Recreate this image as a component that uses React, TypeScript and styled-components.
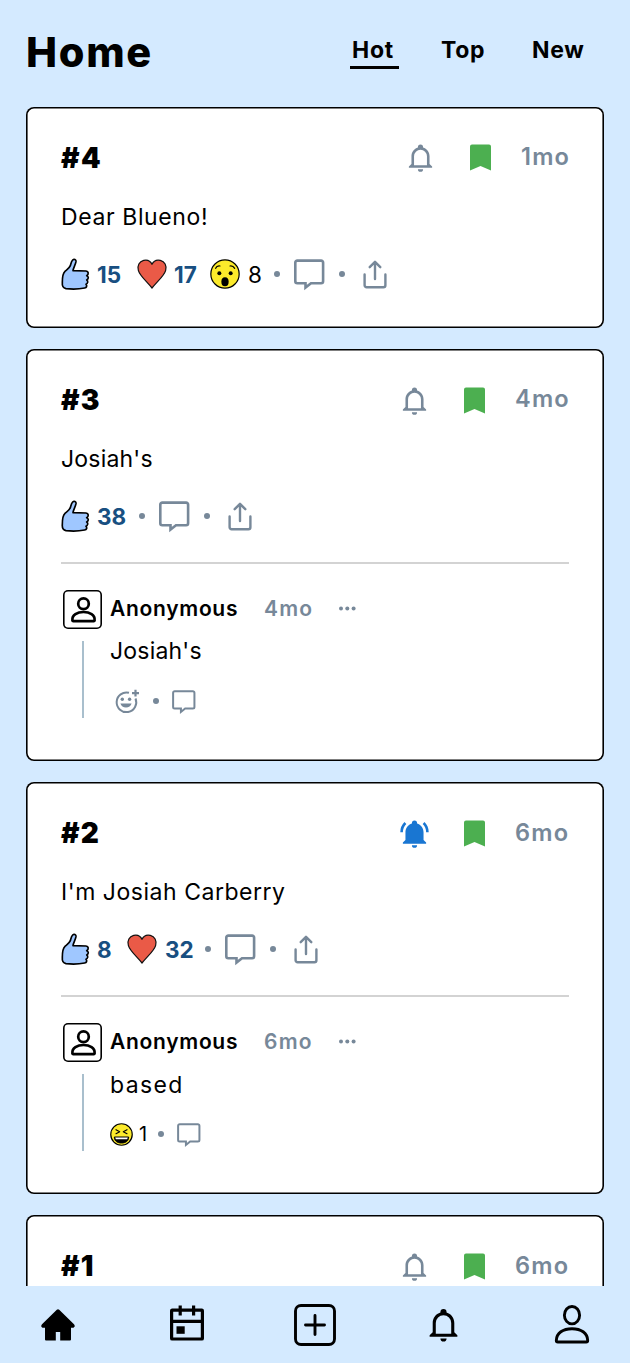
import React from "react";
import styled, { createGlobalStyle } from "styled-components";

const GlobalStyle = createGlobalStyle`
  * { box-sizing: border-box; }
  body { margin: 0; background: #d4eaff; }
  svg { display: block; flex: none; overflow: visible; }
`;

const slate = "#778899";

const Screen = styled.div`
  height: 1363px;
  display: flex;
  flex-direction: column;
  overflow: hidden;
  background: #d4eaff;
  color: #000;
  font-family: Inter, "Liberation Sans", sans-serif;
`;

const TopBar = styled.header`
  flex: none;
  height: 107px;
  padding: 0 45px 0 26px;
  display: flex;
  justify-content: space-between;
`;

const Title = styled.h1`
  margin: 0;
  font-size: 41.5px;
  font-weight: 800;
  line-height: 104px;
  letter-spacing: 1.7px;
`;

const Tabs = styled.nav`
  display: flex;
  gap: 40px;
  padding-top: 30px;
`;

const Tab = styled.a<{ $width: number; $active?: boolean }>`
  width: ${(p) => p.$width}px;
  height: 39px;
  padding-left: 2px;
  border-bottom: 3px solid ${(p) => (p.$active ? "#000" : "transparent")};
  font-size: 23px;
  font-weight: 700;
  line-height: 40px;
  letter-spacing: 0.7px;
  white-space: nowrap;
`;

const Feed = styled.main`
  flex: 1;
  min-height: 0;
  overflow: hidden;
  padding: 0 26px;
  display: flex;
  flex-direction: column;
  gap: 21px;
`;

const Card = styled.article<{ $height: number }>`
  flex: none;
  height: ${(p) => p.$height}px;
  padding: 32px 35px 0;
  background: #fff;
  border-radius: 8px;
  box-shadow: inset 0 0 0 1.6px #000;
`;

const CardHeader = styled.div`
  height: 38px;
  display: flex;
  align-items: center;
`;

const PostNumber = styled.h2<{ $track: number }>`
  margin: 0;
  flex: 1;
  font-size: 28px;
  font-weight: 900;
  letter-spacing: ${(p) => p.$track}px;
`;

const HeaderTools = styled.div<{ $lift?: number }>`
  display: flex;
  align-items: center;
  padding-bottom: ${(p) => p.$lift ?? 0}px;
`;

const BookmarkSlot = styled.span`
  margin: 0 30px 0 34px;
`;

const Time = styled.span<{ $width: number; $lift?: number }>`
  width: ${(p) => p.$width}px;
  padding-bottom: ${(p) => p.$lift ?? 0}px;
  color: ${slate};
  font-size: 23.6px;
  font-weight: 600;
  line-height: 36px;
  letter-spacing: 1.2px;
  white-space: nowrap;
`;

const PostText = styled.p<{ $track: number }>`
  margin: 21px 0 19px;
  font-size: 23px;
  line-height: 38px;
  letter-spacing: ${(p) => p.$track}px;
  white-space: nowrap;
`;

const Actions = styled.div`
  height: 38px;
  display: flex;
  align-items: center;
`;

const Reaction = styled.span<{ $gap: number }>`
  display: flex;
  align-items: center;
  gap: ${(p) => p.$gap}px;
  & + & { margin-left: 15px; }
`;

const Count = styled.span<{ $width: number; $mine?: boolean; $size?: number }>`
  width: ${(p) => p.$width}px;
  color: ${(p) => (p.$mine ? "#184f81" : "#000")};
  font-size: ${(p) => p.$size ?? 22.5}px;
  font-weight: ${(p) => (p.$mine ? 700 : 400)};
  white-space: nowrap;
`;

const Dot = styled.i<{ $before?: number; $after: number }>`
  flex: none;
  width: 6px;
  height: 6px;
  border-radius: 50%;
  margin: 0 ${(p) => p.$after}px 0 ${(p) => p.$before ?? 13}px;
  background: ${slate};
`;

const Divider = styled.hr`
  height: 2px;
  margin: 27px 0 26px;
  border: 0;
  background: #d3d3d3;
`;

const CommentHeader = styled.div`
  height: 38px;
  padding-bottom: 2px;
  display: flex;
  align-items: center;
`;

const Avatar = styled.span`
  width: 39px;
  height: 39px;
  margin: 2px 8px 0 2px;
  display: grid;
  place-items: center;
  border-radius: 5px;
  box-shadow: inset 0 0 0 1.6px #000;
`;

const Author = styled.strong`
  width: 154px;
  font-size: 21px;
  font-weight: 600;
  letter-spacing: 0.7px;
`;

const CommentTime = styled.span`
  width: 75px;
  color: ${slate};
  font-size: 21px;
  font-weight: 600;
  letter-spacing: 1.2px;
`;

const Thread = styled.div`
  display: flex;
`;

const ThreadLine = styled.span`
  width: 2px;
  height: 77px;
  margin: 13px 26px 0 21px;
  background: #a9bfcd;
`;

const CommentText = styled.p<{ $track: number; $drop?: number }>`
  height: 46px;
  margin: 0;
  padding-top: ${(p) => p.$drop ?? 0}px;
  font-size: 23px;
  line-height: 46px;
  letter-spacing: ${(p) => p.$track}px;
`;

const CommentActions = styled.div<{ $inset?: number }>`
  height: 54px;
  padding-left: ${(p) => p.$inset ?? 0}px;
  display: flex;
  align-items: center;
`;

const BottomNav = styled.nav`
  flex: none;
  height: 77px;
  padding: 0 33px;
  display: flex;
  align-items: center;
  justify-content: space-between;
  background: #d4eaff;
`;

const NavItem = styled.a<{ $lift?: number }>`
  width: 50px;
  height: 77px;
  padding-bottom: ${(p) => p.$lift ?? 0}px;
  display: grid;
  place-items: center;
`;

const Bell = ({ size = 31, color = slate }: { size?: number; color?: string }) => (
  <svg width={size} height={size} viewBox="0 0 24 24" fill={color}>
    <path d="M10 21h4a2 2 0 0 1-4 0m11-2v1H3v-1l2-2v-6c0-3.1 2.03-5.83 5-6.71V4a2 2 0 0 1 4 0v.29c2.97.88 5 3.61 5 6.71v6zm-4-8a5 5 0 0 0-10 0v7h10z" />
  </svg>
);

const RingingBell = () => (
  <svg width="31" height="31" viewBox="0 0 24 24" fill="#1976d2">
    <path d="M21 19v1H3v-1l2-2v-6c0-3.1 2.03-5.83 5-6.71V4a2 2 0 0 1 4 0v.29c2.97.88 5 3.61 5 6.71v6zm-7 2a2 2 0 0 1-4 0m9.75-17.81-1.42 1.42A8.98 8.98 0 0 1 21 11h2c0-2.93-1.16-5.75-3.25-7.81M1 11h2c0-2.4 1-4.7 2.67-6.39L4.25 3.19A10.96 10.96 0 0 0 1 11" />
  </svg>
);

const Bookmark = () => (
  <svg width="21" height="26" viewBox="0 0 21 26" fill="#4caf50">
    <path d="M2 .4h17a2 2 0 0 1 2 2V26.400l-10.500-4.400L0 26.400V2.400a2 2 0 0 1 2-2z" />
  </svg>
);

const Thumb = () => (
  <svg width="28" height="32" viewBox="0 0 84 96" fill="#9fc7ff" stroke="#000" strokeWidth="5" strokeLinejoin="round" strokeLinecap="round">
    <path d="M35 6C39 2 46 4 45 11C43 21 37 29 36 38L75 39C83 40 84 49 77 53C84 56 83 63 77 66C82 69 81 76 75 79C79 84 77 89 71 90C52 94 32 94 15 92C6 90 3 83 4 73C4 60 4 47 12 40C18 35 25 31 28 23C30 16 31 10 35 6Z" />
  </svg>
);

const Heart = () => (
  <svg width="30" height="30" viewBox="0 0 90 90" fill="#ea5a47" stroke="#111" strokeWidth="3.6" strokeLinejoin="round">
    <path d="M45 16C40 5 29 2 20 4C7 7 0 20 4 34C8 50 28 66 45 87C62 66 82 50 86 34C90 20 83 7 70 4C61 2 50 5 45 16Z" />
  </svg>
);

const Surprised = () => (
  <svg width="30" height="30" viewBox="0 0 90 90">
    <circle cx="45" cy="45" r="42.5" fill="#fcea2b" stroke="#000" strokeWidth="3.6" />
    <path d="M17 28C19 23 24 20 30 21M60 21C66 20 71 23 74 28" fill="none" stroke="#000" strokeWidth="3.6" strokeLinecap="round" />
    <circle cx="28" cy="43" r="6" />
    <circle cx="62" cy="43" r="6" />
    <ellipse cx="45" cy="68" rx="11" ry="13.5" />
  </svg>
);

const Laughing = () => (
  <svg width="23" height="23" viewBox="0 0 69 69">
    <circle cx="34.5" cy="34.5" r="32.2" fill="#fcea2b" stroke="#000" strokeWidth="3.6" />
    <path d="M18 20l11 6-11 6M51 20l-11 6 11 6" fill="none" stroke="#000" strokeWidth="3.4" strokeLinecap="round" strokeLinejoin="round" />
    <path d="M13 42h43c0 12-9 18-21.500 18S13 54 13 42z" stroke="#000" strokeWidth="3" strokeLinejoin="round" />
    <path d="M15.500 43.500h38l-2 5.500h-34z" fill="#fff" />
  </svg>
);

const CommentIcon = ({ small }: { small?: boolean }) => (
  <svg
    width={small ? 24 : 31}
    height={small ? 23 : 30}
    viewBox="0 0 31 30"
    fill="none"
    stroke={slate}
    strokeWidth="2.6"
  >
    <path d="M3.300 1.600h23.800a2 2 0 0 1 2 2v18.600a2 2 0 0 1-2 2H17l-5.500 4.400v-4.400H3.300a2 2 0 0 1-2-2V3.600a2 2 0 0 1 2-2z" />
  </svg>
);

const ShareIcon = () => (
  <svg width="24" height="29" viewBox="0 0 24 29" fill="none" stroke={slate} strokeWidth="2.400" strokeLinecap="round" strokeLinejoin="round">
    <path d="M1.600 14.500v10.700a2 2 0 0 0 2 2h16.800a2 2 0 0 0 2-2V14.500M12 19V2M6.700 7.200L12 1.800l5.300 5.400" />
  </svg>
);

const AddReaction = () => (
  <svg width="25" height="25" viewBox="0 0 25 25" fill="none" stroke={slate} strokeWidth="2">
    <path d="M14 3.800A9.800 9.800 0 1 0 20.500 9.500" />
    <path d="M17 4.200h7M20.500.8v6.800" strokeWidth="2.200" />
    <circle cx="7.300" cy="10.200" r="1.700" fill={slate} stroke="none" />
    <circle cx="14.600" cy="10.200" r="1.700" fill={slate} stroke="none" />
    <path d="M5.400 14.500h11.200a5.900 5.900 0 0 1-11.200 0z" fill={slate} stroke="none" />
  </svg>
);

const AvatarPerson = () => (
  <svg width="27" height="27" viewBox="0 0 27 27" fill="none" stroke="#000" strokeWidth="2.700" strokeLinejoin="round">
    <ellipse cx="14.500" cy="7.700" rx="5.300" ry="5.400" />
    <path d="M3.400 24.500C2.700 19 8.500 16 14.500 16S26.300 19 25.600 24.500C25.500 25 25.300 25.200 24.800 25.200H4.200C3.700 25.200 3.500 25 3.400 24.500z" />
  </svg>
);

const More = () => (
  <svg width="17" height="5" viewBox="0 0 17 5" fill={slate}>
    <circle cx="2" cy="2.500" r="2" />
    <circle cx="8.300" cy="2.500" r="2" />
    <circle cx="14.600" cy="2.500" r="2" />
  </svg>
);

const HomeIcon = () => (
  <svg width="34" height="32" viewBox="0 0 34 32">
    <path d="M15.800.700Q17 -.300 18.200.700L33 15.200C34.500 17 33.500 18.700 31.700 18.700H30V30.500Q30 31.500 29 31.500H19.200V23H14.800V31.500H5Q4 31.500 4 30.500V18.700H2.300C.500 18.700-.500 17 1 15.200z" />
  </svg>
);

const CalendarIcon = () => (
  <svg width="34" height="36" viewBox="0 0 34 36" fill="none" stroke="#000" strokeWidth="3.200">
    <rect x="1.600" y="5.200" width="30.800" height="28.800" rx=".6" />
    <path d="M1.600 16.400h30.800M10.200.400v10.200M23.600.400v10.200" />
    <rect x="6.500" y="21.300" width="8.200" height="7.500" fill="#000" stroke="none" />
  </svg>
);

const AddIcon = () => (
  <svg width="42" height="42" viewBox="0 0 42 42" fill="none" stroke="#000" strokeWidth="2.900" strokeLinecap="round">
    <rect x="1.500" y="1.500" width="39" height="39" rx="5.500" />
    <path d="M11.500 21h19M21 11.500v19" />
  </svg>
);

const ProfileIcon = () => (
  <svg width="36" height="38" viewBox="0 0 36 38" fill="none" stroke="#000" strokeWidth="2.900" strokeLinejoin="round">
    <ellipse cx="18" cy="10.200" rx="7.600" ry="8.700" />
    <path d="M2.300 35.500C2.500 28 9 23.700 18 23.700S33.500 28 33.700 35.500C33.700 36.400 33 37 32.200 37H3.800C3 37 2.300 36.400 2.300 35.500z" />
  </svg>
);

type HeaderProps = {
  number: string;
  track: number;
  time: string;
  timeWidth: number;
  lift?: number;
  timeLift?: number;
  ringing?: boolean;
};

const PostHeader = ({ number, track, time, timeWidth, lift, timeLift, ringing }: HeaderProps) => (
  <CardHeader>
    <PostNumber $track={track}>{number}</PostNumber>
    <HeaderTools $lift={lift}>
      {ringing ? <RingingBell /> : <Bell />}
      <BookmarkSlot><Bookmark /></BookmarkSlot>
      <Time $width={timeWidth} $lift={timeLift}>{time}</Time>
    </HeaderTools>
  </CardHeader>
);

const PostTools = () => (
  <>
    <Dot $after={14} />
    <CommentIcon />
    <Dot $before={14} $after={18} />
    <ShareIcon />
  </>
);

const Byline = ({ time }: { time: string }) => (
  <CommentHeader>
    <Avatar><AvatarPerson /></Avatar>
    <Author>Anonymous</Author>
    <CommentTime>{time}</CommentTime>
    <More />
  </CommentHeader>
);

export default function App() {
  return (
    <Screen>
      <GlobalStyle />
      <TopBar>
        <Title>Home</Title>
        <Tabs>
          <Tab $width={49} $active>Hot</Tab>
          <Tab $width={51}>Top</Tab>
          <Tab $width={55}>New</Tab>
        </Tabs>
      </TopBar>

      <Feed>
        <Card $height={221}>
          <PostHeader number="#4" track={1.5} time="1mo" timeWidth={48} lift={2} />
          <PostText $track={0.6}>Dear Blueno!</PostText>
          <Actions>
            <Reaction $gap={8}><Thumb /><Count $mine $width={25}>15</Count></Reaction>
            <Reaction $gap={7}><Heart /><Count $mine $width={21}>17</Count></Reaction>
            <Reaction $gap={8}><Surprised /><Count $width={13}>8</Count></Reaction>
            <PostTools />
          </Actions>
        </Card>

        <Card $height={412}>
          <PostHeader number="#3" track={1.2} time="4mo" timeWidth={54} timeLift={2} />
          <PostText $track={0.2}>Josiah's</PostText>
          <Actions>
            <Reaction $gap={8}><Thumb /><Count $mine $width={29}>38</Count></Reaction>
            <PostTools />
          </Actions>
          <Divider />
          <Byline time="4mo" />
          <Thread>
            <ThreadLine />
            <div>
              <CommentText $track={0.2}>Josiah's</CommentText>
              <CommentActions $inset={5}>
                <AddReaction />
                <Dot $after={13} />
                <CommentIcon small />
              </CommentActions>
            </div>
          </Thread>
        </Card>

        <Card $height={412}>
          <PostHeader number="#2" track={1.2} time="6mo" timeWidth={54} ringing />
          <PostText $track={0.53}>I'm Josiah Carberry</PostText>
          <Actions>
            <Reaction $gap={8}><Thumb /><Count $mine $width={15}>8</Count></Reaction>
            <Reaction $gap={8}><Heart /><Count $mine $width={27}>32</Count></Reaction>
            <PostTools />
          </Actions>
          <Divider />
          <Byline time="6mo" />
          <Thread>
            <ThreadLine />
            <div>
              <CommentText $track={1.4} $drop={1}>based</CommentText>
              <CommentActions>
                <Reaction $gap={6}><Laughing /><Count $width={6} $size={20}>1</Count></Reaction>
                <Dot $after={13} />
                <CommentIcon small />
              </CommentActions>
            </div>
          </Thread>
        </Card>

        <Card $height={412}>
          <PostHeader number="#1" track={1.2} time="6mo" timeWidth={54} />
        </Card>
      </Feed>

      <BottomNav>
        <NavItem><HomeIcon /></NavItem>
        <NavItem $lift={3}><CalendarIcon /></NavItem>
        <NavItem><AddIcon /></NavItem>
        <NavItem><Bell size={37} color="#000" /></NavItem>
        <NavItem $lift={1}><ProfileIcon /></NavItem>
      </BottomNav>
    </Screen>
  );
}
